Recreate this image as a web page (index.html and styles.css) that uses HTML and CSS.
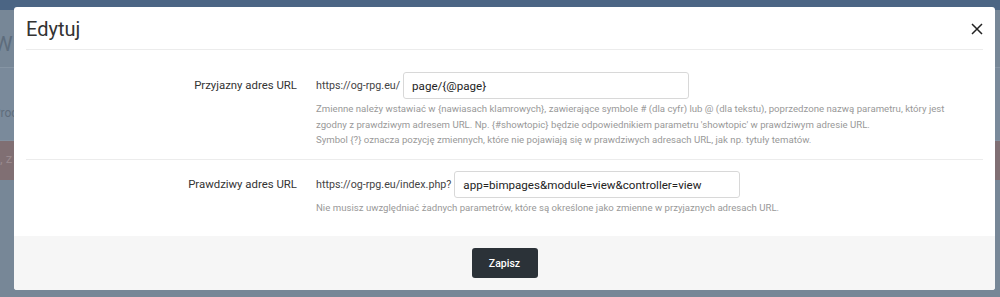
FILE: index.html
```html
<!DOCTYPE html>
<html>

<head>
	<meta charset="utf-8">
	<title>Edytuj</title>
	<meta name="viewport" content="width=device-width, initial-scale=1">
	<link rel="stylesheet" href="styles.css">
</head>

<body>
	<!-- page behind the dimmed backdrop -->
	<div class='page'>
		<div class='page__bar'></div>
		<div class='page__hed'><span class='page__clip page__clip--hed'>W</span></div>
		<div class='page__row'><span class='page__clip page__clip--row'>Proc</span></div>
		<div class='page__band'><span class='page__clip'>, z</span></div>
	</div>

	<div class='modal'>
		<div class='modal__header'>
			<h4 class='modal__title'>Edytuj</h4>
			<button class='modal__close' type='button'>
				<svg width='12' height='12' viewBox='0 0 12 12'>
					<path d='M1 1 L11 11 M11 1 L1 11' stroke='#222' stroke-width='1.5' fill='none' />
				</svg>
			</button>
		</div>
		<div class='modal__body'>
			<div class='field'>
				<label class='field__label'>Przyjazny adres URL</label>
				<div class='field__main'>
					<div class='field__input-row'>
						<span class='field__prefix'>https://og-rpg.eu/</span>
						<input class='field__input' type='text' value='page/{@page}'>
					</div>
					<p class='field__help'>
						Zmienne należy wstawiać w {nawiasach klamrowych}, zawierające symbole # (dla cyfr) lub @ (dla tekstu), poprzedzone nazwą parametru, który jest<br>
						zgodny z prawdziwym adresem URL. Np. {#showtopic} będzie odpowiednikiem parametru 'showtopic' w prawdziwym adresie URL.<br>
						Symbol {?} oznacza pozycję zmiennych, które nie pojawiają się w prawdziwych adresach URL, jak np. tytuły tematów.
					</p>
				</div>
			</div>
			<div class='field'>
				<label class='field__label'>Prawdziwy adres URL</label>
				<div class='field__main'>
					<div class='field__input-row'>
						<span class='field__prefix'>https://og-rpg.eu/index.php?</span>
						<input class='field__input' type='text' value='app=bimpages&amp;module=view&amp;controller=view'>
					</div>
					<p class='field__help'>
						Nie musisz uwzględniać żadnych parametrów, które są określone jako zmienne w przyjaznych adresach URL.
					</p>
				</div>
			</div>
		</div>
		<div class='modal__footer'>
			<button class='btn' type='button'>Zapisz</button>
		</div>
	</div>
</body>

</html>
```

FILE: styles.css
```css
/* base */

* {
	box-sizing: border-box;
}

html,
body {
	margin: 0;
	padding: 0;
	font-family: Roboto, 'Liberation Sans', sans-serif;
}

body {
	height: 297px;
	overflow: hidden;
	background: #778797;
	color: #333;
}

p,
h4 {
	margin: 0;
	font-weight: 400;
}

/* page behind the backdrop */

.page__bar {
	height: 10px;
	background: #4b6584;
}

.page__hed {
	height: 58px;
	padding: 22px 0 0 0;
	font-size: 21px;
	line-height: 24px;
	color: #5d6c7c;
	border-bottom: 1px solid #8695a4;
}

.page__row {
	height: 73px;
	padding: 38px 0 0 0;
	font-size: 12px;
	color: #5f6d7c;
	background: #7a8a9b;
	border-bottom: 1px solid #8391a0;
}

.page__band {
	height: 39px;
	padding: 10px 0 0 0;
	font-size: 13px;
	color: #998a8e;
	background: #806f73;
}

.page__clip {
	display: inline-block;
	width: 14px;
	overflow: hidden;
	white-space: nowrap;
	vertical-align: top;
}

.page__clip--hed {
	text-indent: -6px;
}

.page__clip--row {
	text-indent: -7px;
}

/* modal */

.modal {
	position: absolute;
	top: 7px;
	left: 14px;
	width: 981px;
	height: 283px;
	background: #fff;
	border-radius: 3px;
	overflow: hidden;
	display: flex;
	flex-direction: column;
}

.modal__header {
	flex-shrink: 0;
	display: flex;
	align-items: center;
	justify-content: space-between;
	height: 43px;
	margin: 0 12px;
	padding-top: 2px;
	border-bottom: 1px solid #ececec;
}

.modal__title {
	font-size: 20px;
	color: #333;
}

.modal__close {
	display: flex;
	padding: 0;
	border: 0;
	background: none;
}

.modal__body {
	flex: 1;
	min-height: 0;
	padding: 11px 12px;
}

.modal__footer {
	flex-shrink: 0;
	display: flex;
	justify-content: center;
	align-items: center;
	height: 54px;
	background: #f6f6f6;
}

/* form rows */

.field {
	display: grid;
	grid-template-columns: 271px 1fr;
	column-gap: 19px;
	padding: 11px 0;
}

.field + .field {
	border-top: 1px solid #ececec;
}

.field__label {
	text-align: right;
	font-size: 11.4px;
	line-height: 27px;
	color: #333;
}

.field__input-row {
	display: flex;
	align-items: center;
	gap: 3px;
}

.field__prefix {
	font-size: 10.7px;
	color: #444;
}

.field__input {
	width: 286px;
	height: 27px;
	padding: 0 8px;
	border: 1px solid #d8d8d8;
	border-radius: 3px;
	font-family: Roboto, 'Liberation Sans', sans-serif;
	font-size: 11.6px;
	color: #222;
}

.field__help {
	margin-top: 2px;
	font-size: 9.65px;
	line-height: 15.7px;
	color: #999;
}

/* buttons */

.btn {
	width: 66px;
	height: 30px;
	border: 0;
	border-radius: 3px;
	background: #2b3238;
	color: #fff;
	font-family: Roboto, 'Liberation Sans', sans-serif;
	font-size: 10.5px;
	font-weight: 500;
}
```
